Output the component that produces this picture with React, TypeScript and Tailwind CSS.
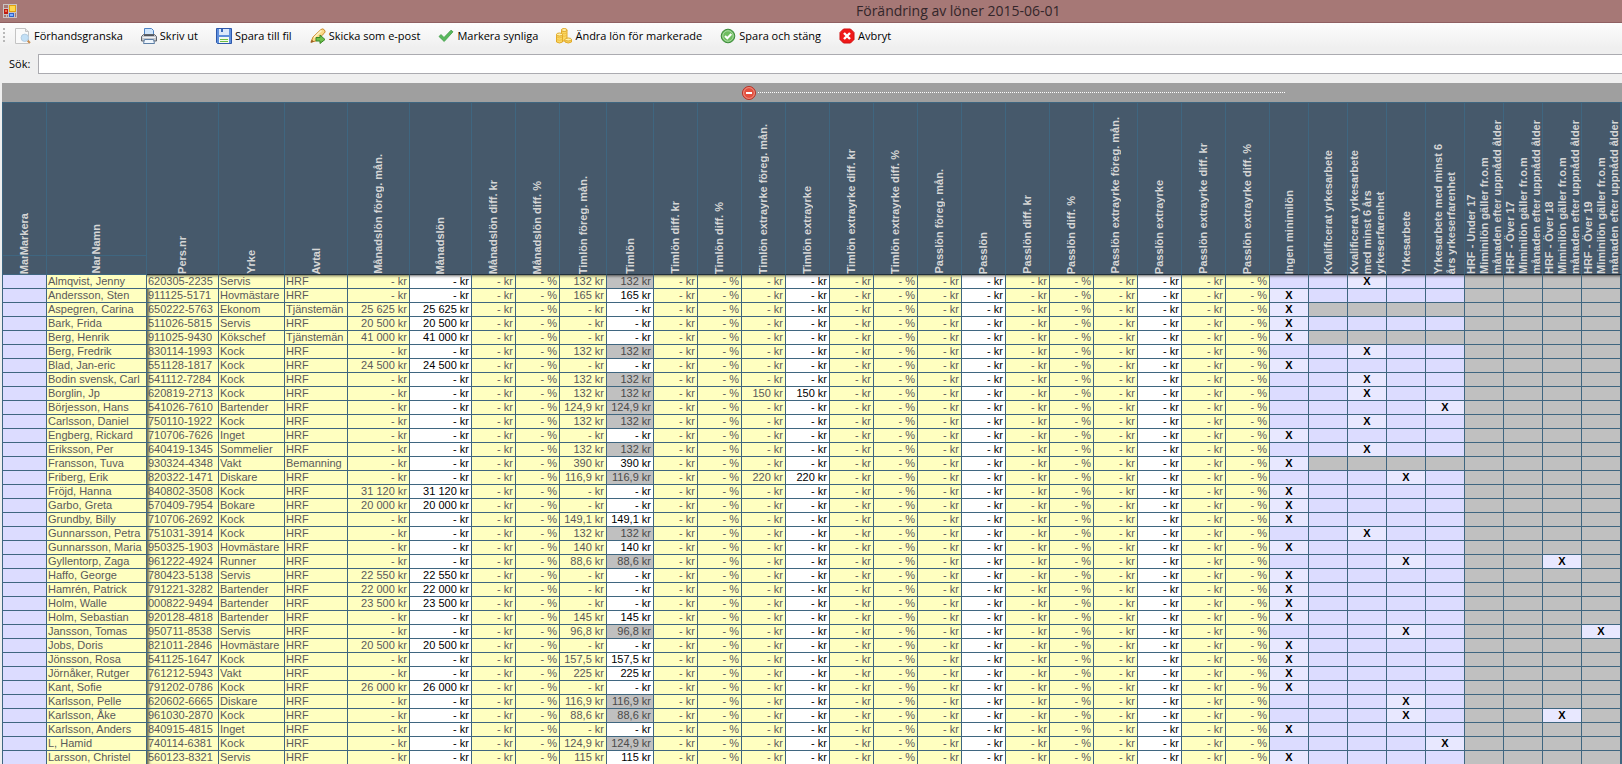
import React from "react";
import clsx from "clsx";

interface Employee {
  name: string;
  persNr: string;
  job: string;
  agreement: string;
  monthly?: string;
  hourly?: string;
  extra?: string;
  marks: Array<number>;
}

interface Column {
  lines: Array<string>;
  width: string;
}

const HRF_LINES = ["Miminilön gäller fr.o.m", "månaden efter uppnådd ålder"];

const columns: Array<Column> = [
  { lines: ["Pers.nr"], width: "w-[72px]" },
  { lines: ["Yrke"], width: "w-[66px]" },
  { lines: ["Avtal"], width: "w-[63px]" },
  { lines: ["Månadslön föreg. mån."], width: "w-[62px]" },
  { lines: ["Månadslön"], width: "w-[62px]" },
  { lines: ["Månadslön diff. kr"], width: "w-[44px]" },
  { lines: ["Månadslön diff. %"], width: "w-[44px]" },
  { lines: ["Timlön föreg. mån."], width: "w-[47px]" },
  { lines: ["Timlön"], width: "w-[47px]" },
  { lines: ["Timlön diff. kr"], width: "w-[44px]" },
  { lines: ["Timlön diff. %"], width: "w-[44px]" },
  { lines: ["Timlön extrayrke föreg. mån."], width: "w-[44px]" },
  { lines: ["Timlön extrayrke"], width: "w-[44px]" },
  { lines: ["Timlön extrayrke diff. kr"], width: "w-[44px]" },
  { lines: ["Timlön extrayrke diff. %"], width: "w-[44px]" },
  { lines: ["Passlön föreg. mån."], width: "w-[44px]" },
  { lines: ["Passlön"], width: "w-[44px]" },
  { lines: ["Passlön diff. kr"], width: "w-[44px]" },
  { lines: ["Passlön diff. %"], width: "w-[44px]" },
  { lines: ["Passlön extrayrke föreg. mån."], width: "w-[44px]" },
  { lines: ["Passlön extrayrke"], width: "w-[44px]" },
  { lines: ["Passlön extrayrke diff. kr"], width: "w-[44px]" },
  { lines: ["Passlön extrayrke diff. %"], width: "w-[44px]" },
  { lines: ["Ingen minimilön"], width: "w-[39px]" },
  { lines: ["Kvalificerat yrkesarbete"], width: "w-[39px]" },
  { lines: ["Kvalificerat yrkesarbete", "med minst 6 års", "yrkeserfarenhet"], width: "w-[39px]" },
  { lines: ["Yrkesarbete"], width: "w-[39px]" },
  { lines: ["Yrkesarbete med minst 6", "års yrkeserfarenhet"], width: "w-[39px]" },
  { lines: ["HRF - Under 17", ...HRF_LINES], width: "w-[39px]" },
  { lines: ["HRF - Över 17", ...HRF_LINES], width: "w-[39px]" },
  { lines: ["HRF - Över 18", ...HRF_LINES], width: "w-[39px]" },
  { lines: ["HRF - Över 19", ...HRF_LINES], width: "w-[40px]" },
];

// marks are indexes into the minimum wage columns, 0 = "Ingen minimilön"
const employees: Array<Employee> = [
  { name: "Almqvist, Jenny", persNr: "620305-2235", job: "Servis", agreement: "HRF", hourly: "132", marks: [2] },
  { name: "Andersson, Sten", persNr: "911125-5171", job: "Hovmästare", agreement: "HRF", hourly: "165", marks: [0] },
  { name: "Aspegren, Carina", persNr: "650222-5763", job: "Ekonom", agreement: "Tjänstemän", monthly: "25 625", marks: [0] },
  { name: "Bark, Frida", persNr: "511026-5815", job: "Servis", agreement: "HRF", monthly: "20 500", marks: [0] },
  { name: "Berg, Henrik", persNr: "911025-9430", job: "Kökschef", agreement: "Tjänstemän", monthly: "41 000", marks: [0] },
  { name: "Berg, Fredrik", persNr: "830114-1993", job: "Kock", agreement: "HRF", hourly: "132", marks: [2] },
  { name: "Blad, Jan-eric", persNr: "551128-1817", job: "Kock", agreement: "HRF", monthly: "24 500", marks: [0] },
  { name: "Bodin svensk, Carl", persNr: "541112-7284", job: "Kock", agreement: "HRF", hourly: "132", marks: [2] },
  { name: "Borglin, Jp", persNr: "620819-2713", job: "Kock", agreement: "HRF", hourly: "132", extra: "150", marks: [2] },
  { name: "Börjesson, Hans", persNr: "541026-7610", job: "Bartender", agreement: "HRF", hourly: "124,9", marks: [4] },
  { name: "Carlsson, Daniel", persNr: "750110-1922", job: "Kock", agreement: "HRF", hourly: "132", marks: [2] },
  { name: "Engberg, Rickard", persNr: "710706-7626", job: "Inget", agreement: "HRF", marks: [0] },
  { name: "Eriksson, Per", persNr: "640419-1345", job: "Sommelier", agreement: "HRF", hourly: "132", marks: [2] },
  { name: "Fransson, Tuva", persNr: "930324-4348", job: "Vakt", agreement: "Bemanning", hourly: "390", marks: [0] },
  { name: "Friberg, Erik", persNr: "820322-1471", job: "Diskare", agreement: "HRF", hourly: "116,9", extra: "220", marks: [3] },
  { name: "Fröjd, Hanna", persNr: "840802-3508", job: "Kock", agreement: "HRF", monthly: "31 120", marks: [0] },
  { name: "Garbo, Greta", persNr: "570409-7954", job: "Bokare", agreement: "HRF", monthly: "20 000", marks: [0] },
  { name: "Grundby, Billy", persNr: "710706-2692", job: "Kock", agreement: "HRF", hourly: "149,1", marks: [0] },
  { name: "Gunnarsson, Petra", persNr: "751031-3914", job: "Kock", agreement: "HRF", hourly: "132", marks: [2] },
  { name: "Gunnarsson, Maria", persNr: "950325-1903", job: "Hovmästare", agreement: "HRF", hourly: "140", marks: [0] },
  { name: "Gyllentorp, Zaga", persNr: "961222-4924", job: "Runner", agreement: "HRF", hourly: "88,6", marks: [3, 7] },
  { name: "Haffo, George", persNr: "780423-5138", job: "Servis", agreement: "HRF", monthly: "22 550", marks: [0] },
  { name: "Hamrén, Patrick", persNr: "791221-3282", job: "Bartender", agreement: "HRF", monthly: "22 000", marks: [0] },
  { name: "Holm, Walle", persNr: "000822-9494", job: "Bartender", agreement: "HRF", monthly: "23 500", marks: [0] },
  { name: "Holm, Sebastian", persNr: "920128-4818", job: "Bartender", agreement: "HRF", hourly: "145", marks: [0] },
  { name: "Jansson, Tomas", persNr: "950711-8538", job: "Servis", agreement: "HRF", hourly: "96,8", marks: [3, 8] },
  { name: "Jobs, Doris", persNr: "821011-2846", job: "Hovmästare", agreement: "HRF", monthly: "20 500", marks: [0] },
  { name: "Jönsson, Rosa", persNr: "541125-1647", job: "Kock", agreement: "HRF", hourly: "157,5", marks: [0] },
  { name: "Jörnåker, Rutger", persNr: "761212-5943", job: "Vakt", agreement: "HRF", hourly: "225", marks: [0] },
  { name: "Kant, Sofie", persNr: "791202-0786", job: "Kock", agreement: "HRF", monthly: "26 000", marks: [0] },
  { name: "Karlsson, Pelle", persNr: "620602-6665", job: "Diskare", agreement: "HRF", hourly: "116,9", marks: [3] },
  { name: "Karlsson, Åke", persNr: "961030-2870", job: "Kock", agreement: "HRF", hourly: "88,6", marks: [3, 7] },
  { name: "Karlsson, Anders", persNr: "840915-4815", job: "Inget", agreement: "HRF", marks: [0] },
  { name: "L, Hamid", persNr: "740114-6381", job: "Kock", agreement: "HRF", hourly: "124,9", marks: [4] },
  { name: "Larsson, Christel", persNr: "560123-8321", job: "Servis", agreement: "HRF", hourly: "115", marks: [0] },
];

const AppIcon = () => (
  <svg width="14" height="14" viewBox="0 0 14 14" shapeRendering="crispEdges">
    <rect width="14" height="14" fill="#c9c3c3" />
    <rect x="1" y="1" width="4" height="3" fill="#a67876" />
    <rect x="1" y="5" width="4" height="5" fill="#c01c10" />
    <rect x="2" y="6" width="2" height="2" fill="#f07050" />
    <rect x="6" y="1" width="7" height="7" fill="#e0a010" />
    <rect x="7" y="2" width="5" height="5" fill="#ffd850" />
    <rect x="6" y="9" width="5" height="4" fill="#2f62cc" />
    <rect x="7" y="10" width="3" height="2" fill="#7fb0ff" />
    <rect x="1" y="11" width="2" height="2" fill="#a67876" />
    <rect x="4" y="11" width="1" height="2" fill="#a67876" />
    <rect x="12" y="9" width="1" height="4" fill="#a67876" />
  </svg>
);

const PreviewIcon = () => (
  <svg width="16" height="16" viewBox="0 0 16 16">
    <path d="M.5 .5h10l3 3v12H.5z" fill="#fafafa" stroke="#c4c4c4" />
    <path d="M10.500 .5v3h3" fill="#e6e6e6" stroke="#c4c4c4" />
    <path d="M12.500 12.500l2.500 2.500" stroke="#c98d50" strokeWidth="2" />
    <circle cx="9.800" cy="9.800" r="3.700" fill="#c3e0f6" stroke="#b4cde2" />
  </svg>
);

const PrintIcon = () => (
  <svg width="16" height="16" viewBox="0 0 16 16">
    <path d="M3.500 8V.5h7l2 2V8z" fill="#cfe5fb" stroke="#4c83c4" />
    <path d="M.5 8.500l2-2h11l2 2v4.500h-15z" fill="#c4c8ce" stroke="#5d636b" />
    <path d="M3 7.500h10" stroke="#4f545b" />
    <path d="M1.500 9.500h13" stroke="#f1f3f5" />
    <path d="M3.500 11.500h9l1 4h-11z" fill="#eef5fc" stroke="#5d7fa6" />
  </svg>
);

const SaveIcon = () => (
  <svg width="16" height="16" viewBox="0 0 16 16">
    <path d="M.5 .5h15v15H1.500l-1-1z" fill="#5e8fdc" stroke="#2d58ab" />
    <rect x="3" y="1" width="10" height="6" fill="#dbe8fa" />
    <rect x="5" y="1" width="2" height="3" fill="#3566b8" />
    <rect x="3" y="9" width="10" height="6" fill="#f4fbef" />
    <path d="M4 11.500h8M4 13.500h8" stroke="#6cbc45" />
  </svg>
);

const SendIcon = () => (
  <svg width="16" height="16" viewBox="0 0 16 16">
    <path d="M1 14l2-5L11 1.500q2-1.500 3.500 .5t-.5 3.500L6 13z" fill="#fbd986" stroke="#c98a2e" />
    <path d="M4 9.500l7.500-7" stroke="#fff3c8" strokeWidth="1.500" />
    <path d="M.5 15l1.300-3.500L4 13.800z" fill="#9a5f25" />
    <path d="M6 9.500h4V7l5 4.500-5 4V13H6z" fill="#6cc04a" stroke="#3a8526" />
  </svg>
);

const CheckIcon = () => (
  <svg width="16" height="16" viewBox="0 0 16 16">
    <path d="M1 8.500l2-2L6 9.500 13 2.200l2 1.600-8.800 9.700z" fill="#58b85c" stroke="#3f9a46" strokeWidth=".8" />
  </svg>
);

const CoinsIcon = () => (
  <svg width="16" height="16" viewBox="0 0 16 16">
    <path d="M5.500 2v11h5.500V2z" fill="#fbd862" stroke="#e0a828" />
    <ellipse cx="8.200" cy="2" rx="2.800" ry="1.500" fill="#fff0a8" stroke="#e0a828" />
    <path d="M5.500 5q2.700 1.500 5.500 0M5.500 7.500q2.700 1.500 5.500 0" fill="none" stroke="#ecb83a" strokeWidth=".8" />
    <path d="M.5 6.500v7.500q3 2 6 0V6.500z" fill="#fbd862" stroke="#e0a828" />
    <ellipse cx="3.500" cy="6.500" rx="3" ry="1.500" fill="#fff0a8" stroke="#e0a828" />
    <path d="M.5 9q3 1.700 6 0M.5 11.500q3 1.700 6 0" fill="none" stroke="#ecb83a" strokeWidth=".8" />
    <path d="M9 11.500v2.500q3.200 2 6.500 0v-2.500z" fill="#fbd862" stroke="#e0a828" />
    <ellipse cx="12.200" cy="11.500" rx="3.200" ry="1.500" fill="#fff0a8" stroke="#e0a828" />
  </svg>
);

const AcceptIcon = () => (
  <svg width="16" height="16" viewBox="0 0 16 16">
    <circle cx="8" cy="8" r="6.800" fill="#58ae4e" stroke="#3d8b3a" />
    <circle cx="8" cy="8" r="5.300" fill="#6fbd60" stroke="#c4e6bc" strokeWidth=".8" />
    <path d="M5 8l2.300 2.300L11.300 6" fill="none" stroke="#fff" strokeWidth="2" />
  </svg>
);

const CancelIcon = () => (
  <svg width="16" height="16" viewBox="0 0 16 16">
    <path d="M4.500 1h7L15 4.500v7L11.500 15h-7L1 11.500v-7z" fill="#f01818" stroke="#d01010" strokeLinejoin="round" />
    <path d="M5 5l6 6M11 5l-6 6" stroke="#fff" strokeWidth="2.400" />
  </svg>
);

const CollapseIcon = () => (
  <svg width="16" height="16" viewBox="0 0 16 16">
    <circle cx="8" cy="8" r="6.500" fill="#e2503f" stroke="#b83226" />
    <circle cx="8" cy="8" r="5.400" fill="none" stroke="#f3a396" strokeWidth=".8" />
    <rect x="5" y="7" width="6" height="2" fill="#fff" />
  </svg>
);

const tools = [
  { label: "Förhandsgranska", icon: <PreviewIcon /> },
  { label: "Skriv ut", icon: <PrintIcon /> },
  { label: "Spara till fil", icon: <SaveIcon /> },
  { label: "Skicka som e-post", icon: <SendIcon /> },
  { label: "Markera synliga", icon: <CheckIcon /> },
  { label: "Ändra lön för markerade", icon: <CoinsIcon /> },
  { label: "Spara och stäng", icon: <AcceptIcon /> },
  { label: "Avbryt", icon: <CancelIcon /> },
];

const VerticalText = ({ lines }: { lines: Array<string> }) => (
  <div className="flex h-full items-end justify-center overflow-hidden">
    <span className="shrink-0 rotate-180 whitespace-nowrap text-left leading-[13px] [writing-mode:vertical-rl]">
      {lines.map((line) => (
        <span key={line} className="block">
          {line}
        </span>
      ))}
    </span>
  </div>
);

const headCell = "border-r border-[#3f6680] p-0 font-bold";

const GridHead = () => (
  <thead className="bg-[#46596b] text-[#d6d6d6]">
    <tr className="h-[154px]">
      {["Markera", "Namn"].map((title) => (
        <th key={title} className={clsx(headCell, "h-[154px] border-y first:border-l")}>
          <VerticalText lines={[title]} />
        </th>
      ))}
      {columns.map((column, i) => (
        <th
          key={i}
          rowSpan={2}
          className={clsx(headCell, "h-[173px] border-t border-b border-b-[#22303c] last:border-r-2")}
        >
          <VerticalText lines={column.lines} />
        </th>
      ))}
    </tr>
    <tr className="h-[19px]">
      {["Markera", "Namn"].map((title) => (
        <th key={title} className={clsx(headCell, "h-[19px] border-b first:border-l")}>
          <div className="h-[18px]">
            <VerticalText lines={[title]} />
          </div>
        </th>
      ))}
    </tr>
  </thead>
);

type Tone = "locked" | "open" | "disabled" | "choice" | "chosen";

interface CellProps {
  tone: Tone;
  align?: "left" | "right" | "center";
  className?: string;
  children?: React.ReactNode;
}

const Cell = ({ tone, align = "left", className, children }: CellProps) => (
  <td
    className={clsx(
      "h-[14px] overflow-hidden whitespace-nowrap border-b border-r border-[#3f6680] py-0 leading-[13px]",
      tone === "locked" && "bg-[#ffffc0] text-[#5a5a5a]",
      tone === "open" && "bg-white text-black",
      tone === "disabled" && "bg-[#c0c0c0] text-[#4a4a4a]",
      tone === "choice" && "bg-[#dcdcff]",
      tone === "chosen" && "bg-[#e8e8ff] font-bold text-black",
      align === "left" && "pl-px text-left",
      align === "right" && "pr-0.5 text-right",
      align === "center" && "text-center",
      className
    )}
  >
    {children}
  </td>
);

const Money = ({ value, tone }: { value?: string; tone: Tone }) => (
  <Cell tone={tone} align="right">
    {value ?? "-"} kr
  </Cell>
);

const Diff = () => (
  <>
    <Money tone="locked" />
    <Cell tone="locked" align="right">
      - %
    </Cell>
  </>
);

const EmployeeRow = ({ employee }: { employee: Employee }) => {
  const { name, persNr, job, agreement, monthly, hourly, extra, marks } = employee;
  const hasMinimum = !marks.includes(0);

  const getTone = (index: number): Tone => {
    if (marks.includes(index)) return "chosen";
    if (index > 4) return "disabled";
    if (index > 0 && agreement !== "HRF") return "disabled";
    return "choice";
  };

  return (
    <tr className="h-[14px] first:[&>td:nth-child(n+3)]:shadow-[inset_0_4px_3px_-3px_rgba(0,0,0,0.6)]">
      <Cell tone="choice" className="border-l" />
      <Cell tone="locked">{name}</Cell>
      <Cell tone="locked" className="shadow-[inset_4px_0_3px_-2px_rgba(0,0,0,0.6)]">
        {persNr}
      </Cell>
      <Cell tone="locked">{job}</Cell>
      <Cell tone="locked">{agreement}</Cell>
      <Money value={monthly} tone="locked" />
      <Money value={monthly} tone="open" />
      <Diff />
      <Money value={hourly} tone="locked" />
      <Money value={hourly} tone={hasMinimum ? "disabled" : "open"} />
      <Diff />
      <Money value={extra} tone="locked" />
      <Money value={extra} tone="open" />
      <Diff />
      <Money tone="locked" />
      <Money tone="open" />
      <Diff />
      <Money tone="locked" />
      <Money tone="open" />
      <Diff />
      {[0, 1, 2, 3, 4, 5, 6, 7, 8].map((index) => (
        <Cell key={index} tone={getTone(index)} align="center" className="last:border-r-2">
          {marks.includes(index) && "X"}
        </Cell>
      ))}
    </tr>
  );
};

const App = () => {
  return (
    <div className="flex h-screen flex-col overflow-hidden bg-[#efefef] font-['Open_Sans',sans-serif] text-black">
      <header className="flex h-[23px] shrink-0 items-center border-b border-[#8f6062] bg-[#a67876] pl-[3px]">
        <AppIcon />
        <h1 className="ml-[839px] whitespace-nowrap text-[14px] leading-5 text-[#33262a]">
          Förändring av löner 2015-06-01
        </h1>
      </header>

      <div className="flex h-[25px] shrink-0 items-center gap-[18px] bg-linear-to-b from-[#fdfdfd] to-[#efefef] pl-[3px]">
        <div className="-mr-2 h-4 w-0.5 shrink-0 bg-[repeating-linear-gradient(#b8b8b8_0_2px,transparent_2px_4px)]" />
        {tools.map(({ label, icon }) => (
          <button key={label} className="flex items-center gap-[3px] whitespace-nowrap text-[11px] leading-4">
            {icon}
            {label}
          </button>
        ))}
      </div>

      <div className="flex shrink-0 items-center pt-1.5 pb-[9px] pl-[9px]">
        <label htmlFor="search" className="w-[29px] text-[11px]">
          Sök:
        </label>
        <input
          id="search"
          type="text"
          className="h-5 min-w-0 flex-1 border border-r-0 border-[#ababb0] bg-white px-1 text-xs outline-none"
        />
      </div>

      <main className="ml-0.5 min-h-0 flex-1 overflow-hidden bg-[#c0c0c0] font-['Liberation_Sans',Arial,sans-serif] text-[11px]">
        <div className="flex h-[19px] items-center bg-[#9f9f9f] pl-[739px]">
          <button aria-label="Dölj kolumner">
            <CollapseIcon />
          </button>
          <div className="ml-px w-[527px] border-t border-dotted border-white" />
        </div>
        <table className="w-[1619px] table-fixed border-separate border-spacing-0">
          <colgroup>
            <col className="w-[45px]" />
            <col className="w-[100px]" />
            {columns.map((column, i) => (
              <col key={i} className={column.width} />
            ))}
          </colgroup>
          <GridHead />
          <tbody>
            {employees.map((employee) => (
              <EmployeeRow key={employee.persNr} employee={employee} />
            ))}
          </tbody>
        </table>
      </main>
    </div>
  );
};

export default App;
